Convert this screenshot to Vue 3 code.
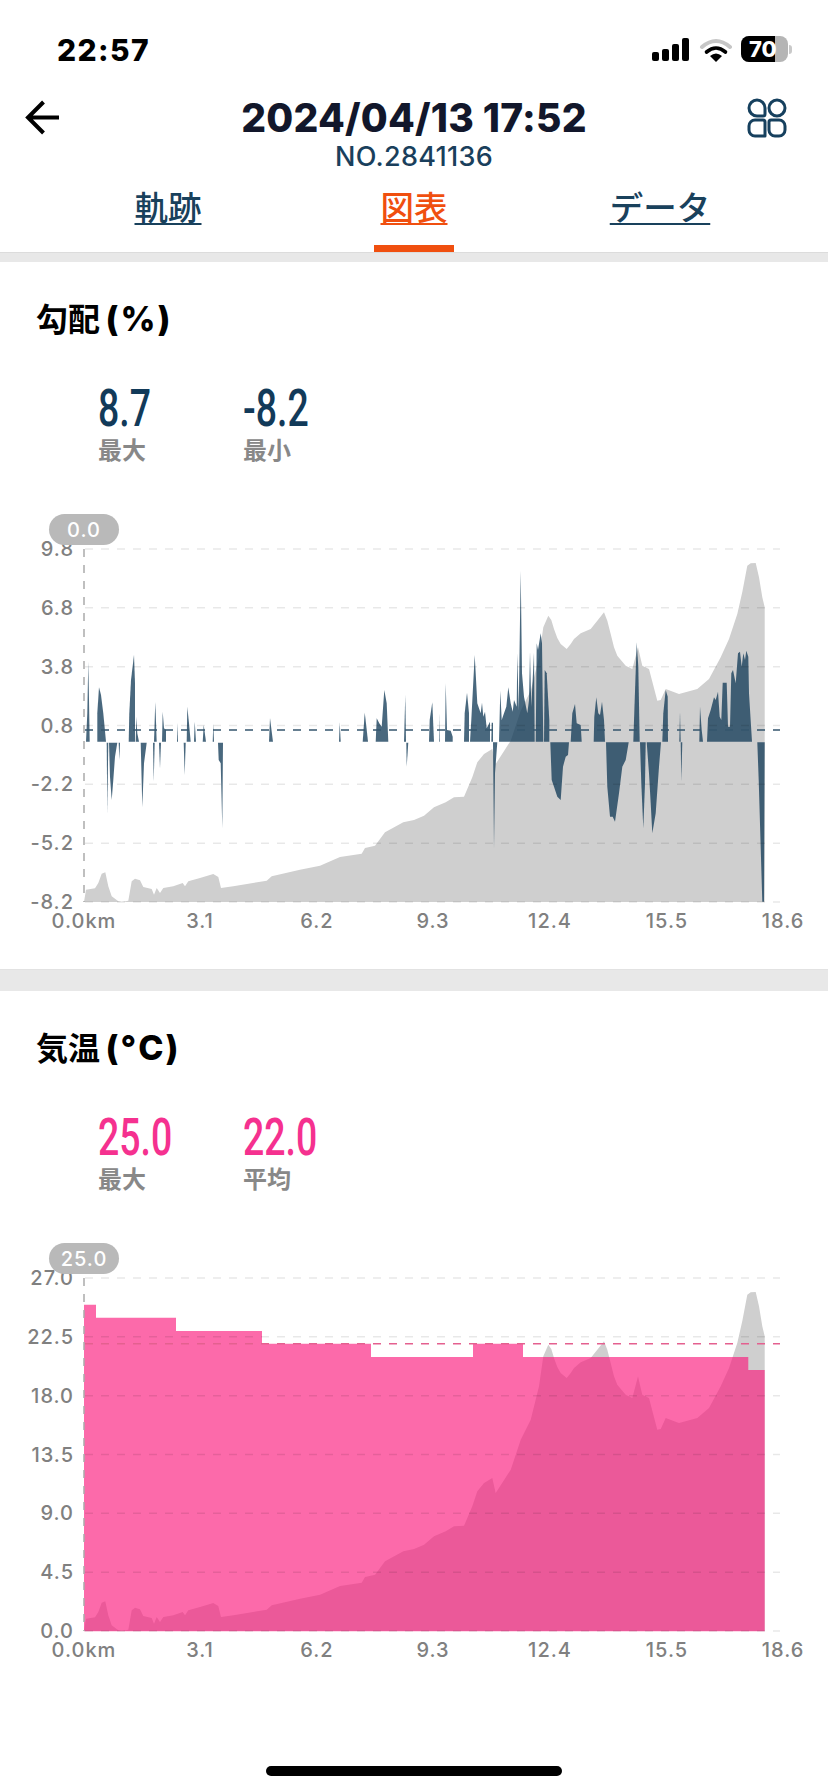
<script setup>
const elevPts = [
  [252,0],[258,37],[285,41],[295,57],[305,85],[316,89],[325,47],[335,17],[355,2],[365,0],[385,4],[395,62],[405,70],[420,65],[430,45],[455,39],[462,22],[470,42],[480,27],[490,42],[520,47],[548,57],[555,47],[565,62],[600,72],[640,84],[655,75],[663,42],[700,47],[800,64],[815,77],[900,97],[960,109],[1020,135],[1085,145],[1095,162],[1125,169],[1155,209],[1210,239],
  [1242,246],[1272,259],[1302,284],[1337,299],[1362,314],[1392,316],[1417,374],[1432,419],[1452,444],[1477,459],[1487,414],[1532,484],[1562,574],[1592,634],[1617,734],[1630,824],[1645,859],[1654,846],[1662,819],[1672,792],[1682,774],[1700,759],[1712,774],[1722,789],[1742,806],[1772,819],[1792,844],[1812,869],[1822,844],[1832,804],[1842,764],[1852,739],[1877,709],[1897,699],[1914,764],[1927,709],[1947,699],[1972,604],[1982,606],[1997,639],[2037,624],[2092,639],[2127,669],[2162,734],[2187,789],[2212,864],[2227,930],[2242,1009],[2252,1016],[2267,1017],[2277,974],[2287,914],[2294,884],[2294,0]
]
const elevation = elevPts.map(([x, h]) => [x / 3, h / 3])

const barsLeft = [
  [[258,425],[262,340],[265,185],[267,300],[269,425]],
  [[292,425],[292,340],[297,262],[303,285],[310,340],[318,425]],
  [[386,425],[388,340],[393,240],[402,165],[405,250],[405,425]],
  [[407,425],[409,350],[412,400],[417,425]],
  [[462,425],[466,305],[470,425]],
  [[486,425],[488,335],[492,385],[498,390],[498,425]],
  [[531,425],[532,368],[534,425]],
  [[560,425],[562,320],[567,370],[572,425]],
  [[582,425],[584,365],[588,425]],
  [[608,425],[611,375],[618,425]],
  [[638,425],[640,372],[642,425]],
  [[807,425],[810,355],[819,425]],
  [[1017,425],[1019,367],[1022,425]],
  [[1088,425],[1094,338],[1098,370],[1104,425]],
  [[1127,425],[1130,355],[1138,370],[1145,380],[1153,270],[1160,310],[1165,425]],
  [[1212,425],[1216,285],[1218,425]],
  [[320,428],[322,640],[325,428]],
  [[327,428],[330,530],[335,600],[340,540],[345,470],[352,428]],
  [[356,428],[358,480],[360,428]],
  [[422,428],[424,500],[427,622],[432,490],[440,428]],
  [[459,428],[461,545],[464,428]],
  [[477,428],[480,505],[483,428]],
  [[551,428],[554,525],[557,428]],
  [[654,428],[656,480],[662,490],[667,685],[669,428]],
  [[1219,428],[1220,500],[1225,428]]
]
const barsRight = [
  [[45,605],[47,540],[55,487],[60,605]],
  [[75,605],[76,520],[77,605]],
  [[93,605],[95,430],[99,570],[110,572],[116,590],[116,605]],
  [[150,605],[152,520],[159,458],[165,520],[165,605]],
  [[168,605],[172,540],[182,345],[190,490],[200,520],[204,488],[208,530],[213,515],[218,565],[228,545],[228,605]],
  [[232,605],[233,548],[237,548],[237,605]],
  [[255,605],[259,452],[263,540],[270,520],[277,500],[283,442],[290,490],[296,515],[300,480],[308,500],[310,340],[314,510],[320,93],[324,400],[330,470],[340,520],[345,480],[348,335],[352,500],[360,338],[362,605]],
  [[365,605],[368,310],[372,330],[380,280],[384,310],[388,605]],
  [[390,605],[392,390],[398,400],[406,540],[406,605]],
  [[470,605],[475,520],[483,492],[488,550],[500,555],[503,605]],
  [[539,605],[541,530],[547,472],[553,520],[558,525],[564,485],[570,540],[573,605]],
  [[658,605],[662,480],[668,307],[673,380],[677,605]],
  [[745,605],[748,520],[755,450],[761,470],[762,605]],
  [[796,605],[798,515],[800,605]],
  [[856,605],[858,500],[863,570],[867,605]],
  [[879,605],[882,535],[890,510],[900,472],[905,480],[912,455],[917,530],[922,540],[926,428],[938,428],[942,560],[948,560],[952,400],[957,390],[965,430],[972,340],[978,335],[983,380],[988,340],[993,360],[997,332],[1003,350],[1005,460],[1014,605]],
  [[237,607],[240,925],[243,700],[250,607]],
  [[409,607],[413,720],[420,740],[430,770],[440,780],[447,680],[455,650],[462,645],[465,607]],
  [[576,607],[580,740],[588,830],[596,830],[603,845],[615,760],[625,680],[635,660],[644,607]],
  [[678,607],[682,730],[688,865],[693,730],[695,607]],
  [[698,607],[705,700],[710,790],[715,880],[725,820],[735,680],[741,607]],
  [[800,607],[802,725],[805,607]],
  [[1030,607],[1034,720],[1045,1085],[1050,1085],[1052,607]]
]
const GRID_TOP = 44
const BOTTOM = 397
const STEP = (BOTTOM - GRID_TOP) / 6
const gridYs = Array.from({ length: 7 }, (_, i) => GRID_TOP + STEP * i)
const fmt = (n) => n.toFixed(1)
const toStr = (pts) => pts.map((p) => `${fmt(p[0])},${fmt(p[1])}`).join(' ')

const elevationPoints = toStr(elevation.map(([x, h]) => [x, BOTTOM - h]))
const barPolys = [
  ...barsLeft.map((poly) => toStr(poly.map(([x, y]) => [x / 3, 600 + y / 3 - 505]))),
  ...barsRight.map((poly) => toStr(poly.map(([x, y]) => [414 + x / 3, 540 + y / 3 - 505])))
]
const tempSteps = [[252,224],[288,224],[288,263],[528,263],[528,303],[786,303],[786,341],[1113,341],[1113,381],[1419,381],[1419,341],[1569,341],[1569,381],[2245,381],[2245,420],[2294,420],[2294,1204],[252,1204]]
const tempPoly = toStr(tempSteps.map(([x, y]) => [x / 3, 1230 + y / 3 - 1234]))

const xLabels = [
  { x: 84, t: '0.0km' }, { x: 200, t: '3.1' }, { x: 317, t: '6.2' }, { x: 433, t: '9.3' },
  { x: 550, t: '12.4' }, { x: 667, t: '15.5' }, { x: 783, t: '18.6' }
]
const charts = [
  {
    id: 'slope', title: '勾配', unit: '(%)', tone: 'navy', pill: '0.0',
    stats: [{ v: '8.7', l: '最大' }, { v: '-8.2', l: '最小' }],
    yLabels: ['9.8', '6.8', '3.8', '0.8', '-2.2', '-5.2', '-8.2'],
    avgY: 225, avgColor: '#35566e'
  },
  {
    id: 'temp', title: '気温', unit: '(°C)', tone: 'pink', pill: '25.0',
    stats: [{ v: '25.0', l: '最大' }, { v: '22.0', l: '平均' }],
    yLabels: ['27.0', '22.5', '18.0', '13.5', '9.0', '4.5', '0.0'],
    avgY: 109.7, avgColor: '#e4608f'
  }
]
const tabs = [
  { t: '軌跡', on: false }, { t: '図表', on: true }, { t: 'データ', on: false }
]
</script>

<template>
  <div class="page">
    <div class="status">
      <span class="clock">22:57</span>
      <div class="status-icons">
        <svg class="signal" width="38" height="24" viewBox="0 0 38 24">
          <rect x="0" y="14" width="7" height="9" rx="2" />
          <rect x="10" y="11" width="7" height="12" rx="2" />
          <rect x="20" y="6" width="7" height="17" rx="2" />
          <rect x="30" y="0" width="7" height="23" rx="2" />
        </svg>
        <svg class="wifi" width="34" height="24" viewBox="0 0 34 24">
          <path d="M3 9 Q17 -3 31 9" fill="none" stroke="#c6c6c6" stroke-width="4" stroke-linecap="round" />
          <path d="M7.5 14 Q17 6 26.5 14" fill="none" stroke="#000" stroke-width="3.6" stroke-linecap="round" />
          <path d="M11 18 Q17 13 23 18 L17 24 Z" fill="#000" />
        </svg>
        <div class="battery">
          <div class="battery-body">
            <span class="battery-fill"></span>
            <span class="battery-text">70</span>
          </div>
          <span class="battery-nub"></span>
        </div>
      </div>
    </div>

    <header class="nav">
      <svg class="back" width="36" height="36" viewBox="0 0 36 36">
        <path d="M34 17.5 H3 M18.5 2 L3 17.5 L18.5 33" fill="none" stroke="#000" stroke-width="4" />
      </svg>
      <div class="heading">
        <div class="date">2024/04/13 17:52</div>
        <div class="number">NO.2841136</div>
      </div>
      <svg class="apps" width="40" height="40" viewBox="0 0 40 40">
        <g fill="none" stroke="#16405e" stroke-width="3" stroke-linejoin="round">
          <path d="M2 10 a8 8 0 0 1 16 0 V16 a2 2 0 0 1 -2 2 H10 a8 8 0 0 1 -8 -8 Z" />
          <circle cx="30" cy="10" r="8" />
          <path d="M8 22 H16 a2 2 0 0 1 2 2 V38 H8 a6 6 0 0 1 -6 -6 V28 a6 6 0 0 1 6 -6 Z" />
          <path d="M24 22 H32 a6 6 0 0 1 6 6 V32 a6 6 0 0 1 -6 6 H28 a6 6 0 0 1 -6 -6 V24 a2 2 0 0 1 2 -2 Z" />
        </g>
      </svg>
    </header>

    <nav class="tabs">
      <div v-for="tab in tabs" :key="tab.t" class="tab" :class="{ on: tab.on }">
        <span class="tab-label">{{ tab.t }}</span>
        <span class="tab-bar"></span>
      </div>
    </nav>
    <div class="divider thin"></div>

    <template v-for="(c, ci) in charts" :key="c.id">
      <section class="card">
        <h2 class="card-title">{{ c.title }} <span class="unit">{{ c.unit }}</span></h2>
        <div class="stats" :class="c.tone">
          <div v-for="s in c.stats" :key="s.l" class="stat">
            <div class="stat-value"><span>{{ s.v }}</span></div>
            <div class="stat-label">{{ s.l }}</div>
          </div>
        </div>
        <svg class="chart" width="828" height="440" viewBox="0 0 828 440">
          <polygon :points="elevationPoints" fill="#cfcfcf" />
          <template v-if="c.id === 'slope'">
            <polygon v-for="(p, i) in barPolys" :key="i" :points="p" fill="#123a57" fill-opacity="0.77" />
          </template>
          <polygon v-else :points="tempPoly" fill="rgb(250,26,125)" fill-opacity="0.65" />

          <line v-for="y in gridYs" :key="y" x1="85" x2="780" :y1="y" :y2="y" stroke="#000" stroke-opacity="0.09" stroke-width="1.5" stroke-dasharray="8 8" />
          <line x1="84" x2="84" :y1="GRID_TOP" :y2="BOTTOM" stroke="#aaa" stroke-width="1.5" stroke-dasharray="8 8" />
          <line x1="85" x2="780" :y1="c.avgY" :y2="c.avgY" :stroke="c.avgColor" stroke-width="1.6" stroke-dasharray="8 8" />

          <text v-for="(l, i) in c.yLabels" :key="l" class="axis" x="74" :y="gridYs[i] + 7" text-anchor="end">{{ l }}</text>
          <text v-for="l in xLabels" :key="l.t" class="axis" :x="l.x" y="423" text-anchor="middle">{{ l.t }}</text>

          <rect x="49" y="9" width="70" height="31" rx="15.5" fill="#b9b9b9" />
          <text class="pill" x="84" y="32" text-anchor="middle">{{ c.pill }}</text>
        </svg>
      </section>
      <div v-if="ci === 0" class="divider thick"></div>
    </template>

    <div class="home"></div>
  </div>
</template>

<style scoped>
.page {
  position: relative;
  width: 828px;
  height: 1792px;
  background: #fff;
  overflow: hidden;
  font-family: Inter, "Noto Sans CJK JP", sans-serif;
}
.status {
  height: 88px;
  display: flex;
  justify-content: space-between;
  padding: 36px 36px 0 57px;
  box-sizing: border-box;
}
.clock {
  margin-top: -1px;
  font-size: 30px;
  font-weight: 800;
  line-height: 30px;
  color: #000;
  letter-spacing: 1.4px;
}
.status-icons {
  display: flex;
  align-items: flex-start;
}
.signal { margin: 2px 9px 0 0; }
.wifi { margin: 2px 8px 0 0; }
.battery {
  display: flex;
  align-items: center;
  height: 26px;
}
.battery-body {
  position: relative;
  width: 47px;
  height: 26px;
  border-radius: 8px;
  background: #b5b5b5;
  overflow: hidden;
}
.battery-fill {
  display: block;
  width: 34px;
  height: 26px;
  background: #000;
}
.battery-text {
  position: absolute;
  left: 8px;
  top: 0;
  line-height: 26px;
  font-size: 22px;
  font-weight: 800;
  color: #fff;
}
.battery-nub {
  width: 3px;
  height: 9px;
  margin-left: 1px;
  border-radius: 0 3px 3px 0;
  background: #c9c9c9;
}
.nav {
  height: 92px;
  display: flex;
  justify-content: space-between;
  align-items: flex-start;
  padding: 0 41px 0 25px;
}
.back { margin: 12px 20px 0 0; }
.apps { margin-top: 10px; }
.heading {
  text-align: center;
}
.date {
  font-size: 39px;
  font-weight: 800;
  line-height: 48px;
  margin-top: 6px;
  color: #12172b;
  white-space: nowrap;
  letter-spacing: 0.2px;
}
.number {
  font-size: 27px;
  font-weight: 500;
  line-height: 30px;
  letter-spacing: 0.3px;
  color: #1a3f5c;
}
.tabs {
  height: 72px;
  display: flex;
  padding: 0 45px;
}
.tab {
  flex: 1;
  display: flex;
  flex-direction: column;
  align-items: center;
  color: #19415c;
}
.tab.on { color: #f04f0f; }
.tab-label {
  margin-top: 4px;
  font-size: 33.5px;
  font-weight: 500;
  line-height: 48px;
  text-decoration: underline;
  text-decoration-thickness: 2px;
  text-underline-offset: 3px;
}
.tab-bar {
  width: 80px;
  height: 7px;
  margin-top: auto;
}
.tab.on .tab-bar { background: #f04f0f; }
.divider {
  background: #e8e8e8;
  border-top: 1px solid #dcdcdc;
  box-sizing: border-box;
}
.divider.thin { height: 10px; }
.divider.thick { height: 22px; border-top-color: #e2e2e2; }
.card {
  height: 707px;
  padding-top: 37px;
  box-sizing: border-box;
}
.card-title {
  margin: 0 0 1px 36px;
  font-size: 32px;
  font-weight: 700;
  line-height: 40px;
  color: #000;
  word-spacing: -2px;
}
.unit {
  font-size: 34px;
  font-weight: 800;
  letter-spacing: 2px;
}
.stats {
  display: flex;
  margin: 46px 0 0 98px;
}
.stat { width: 145px; }
.stat-value {
  height: 46px;
  line-height: 46px;
  font-family: Roboto, sans-serif;
  font-size: 52px;
  font-weight: 500;
}
.stat-value span {
  display: inline-block;
  transform: scaleX(0.72);
  transform-origin: left center;
}
.stats.navy .stat-value { color: #123a59; }
.stats.pink .stat-value { color: #f5318f; }
.stat-label {
  margin-top: 5px;
  font-size: 24px;
  font-weight: 700;
  line-height: 28px;
  color: #888;
}
.chart {
  display: block;
  margin-top: 40px;
}
.axis {
  font-family: Inter, sans-serif;
  font-size: 20px;
  font-weight: 500;
  letter-spacing: 1px;
  fill: #808080;
}
.pill {
  font-family: Inter, sans-serif;
  font-size: 20px;
  font-weight: 500;
  letter-spacing: 1px;
  fill: #fff;
}
.home {
  position: absolute;
  left: 266px;
  top: 1766px;
  width: 296px;
  height: 10px;
  border-radius: 5px;
  background: #000;
}
</style>
